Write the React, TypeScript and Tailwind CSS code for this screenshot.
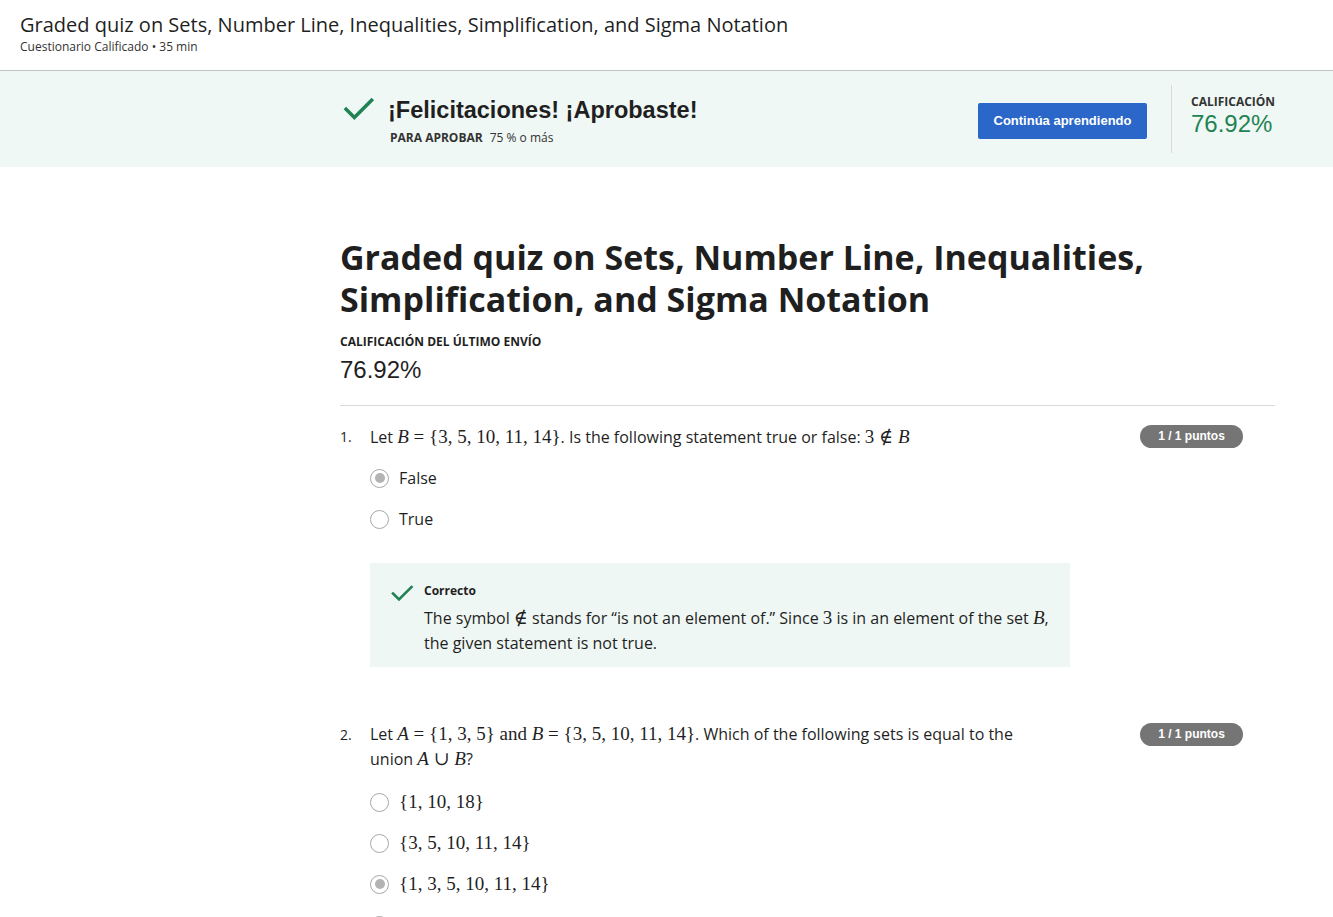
import React from "react";

const sans = { fontFamily: '"Open Sans", "Noto Sans", sans-serif' };
const helv = { fontFamily: '"Liberation Sans", Arial, sans-serif' };
const serif = { fontFamily: '"Liberation Serif", "DejaVu Serif", serif' };

function M({ children }: { children: React.ReactNode }) {
  return (
    <span className="text-[19px] leading-[20px] text-[#1f1f1f]" style={serif}>
      {children}
    </span>
  );
}
function V({ children }: { children: React.ReactNode }) {
  return <i className="italic">{children}</i>;
}

function Check({ className }: { className?: string }) {
  return (
    <svg viewBox="0 0 24 24" className={className} fill="none">
      <path d="M3 12.5l6 6L21.5 6" stroke="#1f8354" strokeWidth="2.6" strokeLinecap="square" />
    </svg>
  );
}

function Radio({ selected, children }: { selected?: boolean; children: React.ReactNode }) {
  return (
    <div className="flex items-center gap-[10px] h-[24px]">
      <span className="w-[19px] h-[19px] rounded-full border-[1.5px] border-[#a8a8a8] flex items-center justify-center shrink-0">
        {selected && <span className="w-[10px] h-[10px] rounded-full bg-[#b3b3b3]" />}
      </span>
      <span className="text-[16px] text-[#1f1f1f]">{children}</span>
    </div>
  );
}

function Badge() {
  return (
    <span
      className="inline-flex items-center justify-center h-[23px] w-[103px] rounded-full bg-[#757575] text-white text-[12px] font-bold"
      style={helv}
    >
      1 / 1 puntos
    </span>
  );
}

export default function App() {
  return (
    <div className="w-[1333px] h-[917px] overflow-hidden bg-white text-[#1f1f1f]" style={sans}>
      {/* header */}
      <header className="h-[71px] border-b border-[#c4c4c4] px-[20px] pt-[11px]">
        <h1 className="text-[20px] leading-[28px] text-[#1f1f1f]">
          Graded quiz on Sets, Number Line, Inequalities, Simplification, and Sigma Notation
        </h1>
        <div className="text-[12px] leading-[16px] text-[#333]">Cuestionario Calificado • 35 min</div>
      </header>

      {/* banner */}
      <section className="h-[96px] bg-[#f0f8f5] flex">
        <div className="ml-[342px] flex pt-[22px]">
          <Check className="w-[33px] h-[33px] mt-[-1px]" />
          <div className="ml-[13px]">
            <div className="text-[23.5px] leading-[34px] font-bold text-[#1f1f1f]" style={helv}>
              ¡Felicitaciones! ¡Aprobaste!
            </div>
            <div className="mt-[3px] ml-[2px] text-[12px] leading-[16px]">
              <span className="font-bold text-[#333]">PARA APROBAR</span>
              <span className="ml-[7px] text-[#333]">75 % o más</span>
            </div>
          </div>
        </div>
        <div className="ml-auto flex items-center">
          <button
            className="h-[36px] w-[169px] rounded-[2px] bg-[#2a67c9] text-white text-[13px] font-bold mr-[24px] mt-[4px]"
            style={helv}
          >
            Continúa aprendiendo
          </button>
          <div className="self-stretch my-[14px] border-l border-[#d9d9d9]" />
          <div className="w-[161px] pl-[19px] self-start mt-[23px]">
            <div className="text-[12px] leading-[16px] font-bold text-[#333]">CALIFICACIÓN</div>
            <div className="text-[24px] leading-[28px] text-[#1f8354]" style={helv}>
              76.92%
            </div>
          </div>
        </div>
      </section>

      {/* main */}
      <main className="ml-[340px] w-[935px] pt-[69px]">
        <h2 className="text-[34px] leading-[42px] font-bold text-[#1f1f1f] w-[820px]">
          Graded quiz on Sets, Number Line, Inequalities, Simplification, and Sigma Notation
        </h2>
        <div className="mt-[14px] text-[12px] leading-[16px] font-bold text-[#1f1f1f]">
          CALIFICACIÓN DEL ÚLTIMO ENVÍO
        </div>
        <div className="mt-[5px] text-[24px] leading-[30px] text-[#1f1f1f]" style={helv}>
          76.92%
        </div>
        <div className="mt-[20px] border-t border-[#d9d9d9]" />

        {/* Q1 */}
        <div className="mt-[18px] flex">
          <div className="w-[30px] text-[14px] leading-[26px]">1.</div>
          <div className="flex-1">
            <div className="flex justify-between items-start">
              <div className="text-[16px] leading-[26px]">
                Let <M><V>B</V> = {"{"}3, 5, 10, 11, 14{"}"}</M>. Is the following statement true or false:{" "}
                <M>3 ∉ <V>B</V></M>
              </div>
              <div className="mr-[32px] mt-[-2px]">
                <Badge />
              </div>
            </div>
            <div className="mt-[16px] flex flex-col gap-[17px]">
              <Radio selected>False</Radio>
              <Radio>True</Radio>
            </div>
            <div className="mt-[32px] w-[700px] h-[104px] bg-[#eff7f4] flex pl-[20px] pt-[18px]">
              <Check className="w-[24px] h-[24px]" />
              <div className="ml-[10px]">
                <div className="text-[12px] leading-[20px] font-bold text-[#1f1f1f]">Correcto</div>
                <div className="text-[16px] leading-[25px] mt-[5px] w-[640px]">
                  The symbol <M>∉</M> stands for “is not an element of.” Since <M>3</M> is in an element of the set{" "}
                  <M><V>B</V></M>, the given statement is not true.
                </div>
              </div>
            </div>
          </div>
        </div>

        {/* Q2 */}
        <div className="mt-[55px] flex">
          <div className="w-[30px] text-[14px] leading-[25px]">2.</div>
          <div className="flex-1">
            <div className="flex justify-between items-start">
              <div className="text-[16px] leading-[25px] w-[680px]">
                Let <M><V>A</V> = {"{"}1, 3, 5{"}"} and <V>B</V> = {"{"}3, 5, 10, 11, 14{"}"}</M>. Which of the following
                sets is equal to the union <M><V>A</V> ∪ <V>B</V></M>?
              </div>
              <div className="mr-[32px] mt-[-2px]">
                <Badge />
              </div>
            </div>
            <div className="mt-[18px] flex flex-col gap-[17px]">
              <Radio><M>{"{"}1, 10, 18{"}"}</M></Radio>
              <Radio><M>{"{"}3, 5, 10, 11, 14{"}"}</M></Radio>
              <Radio selected><M>{"{"}1, 3, 5, 10, 11, 14{"}"}</M></Radio>
              <Radio><M>{"{"}1, 3, 5, 10, 11, 14, 18{"}"}</M></Radio>
            </div>
          </div>
        </div>
      </main>
    </div>
  );
}
